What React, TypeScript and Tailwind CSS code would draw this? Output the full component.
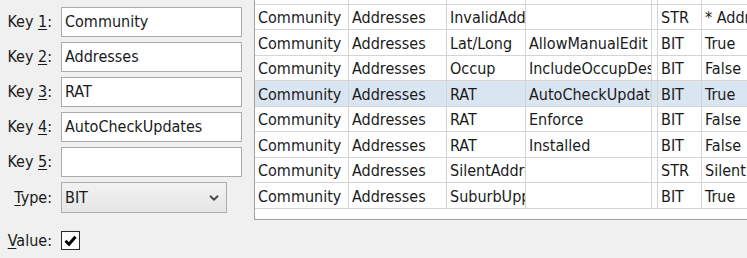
import React from 'react';
import { ChevronDown } from 'lucide-react';

type Row = [string, string, string, string, string, string];

const rows: Row[] = [
  ['Community', 'Addresses', 'InvalidAddress', '', 'STR', '* Address'],
  ['Community', 'Addresses', 'Lat/Long', 'AllowManualEdit', 'BIT', 'True'],
  ['Community', 'Addresses', 'Occup', 'IncludeOccupDesc', 'BIT', 'False'],
  ['Community', 'Addresses', 'RAT', 'AutoCheckUpdates', 'BIT', 'True'],
  ['Community', 'Addresses', 'RAT', 'Enforce', 'BIT', 'False'],
  ['Community', 'Addresses', 'RAT', 'Installed', 'BIT', 'False'],
  ['Community', 'Addresses', 'SilentAddress', '', 'STR', 'Silent'],
  ['Community', 'Addresses', 'SuburbUpper', '', 'BIT', 'True'],
];

const SELECTED = 3;

const font = { fontFamily: '"DejaVu Sans Condensed", "Liberation Sans", sans-serif' };

// cells clip their text at the grid line, like the Swing table does
const cell = 'shrink-0 h-full overflow-hidden whitespace-nowrap pl-[3px] pt-[2px] flex items-center border-r border-[#d4d4d4]';

const Label: React.FC<{ pre: string; u: string; post: string }> = ({ pre, u, post }) => (
  <div className="w-[55px] shrink-0 text-right pr-[3px] text-[#1a1a1a]">
    {pre}
    <span className="underline underline-offset-2">{u}</span>
    {post}
  </div>
);

const Field: React.FC<{ value: string }> = ({ value }) => (
  <div className="w-[181px] h-[30px] ml-[6px] bg-white border border-[#ababab] flex items-center pl-[3px] text-[#1a1a1a]">
    {value}
  </div>
);

export default function App() {
  return (
    <div className="w-[747px] h-[258px] overflow-hidden bg-[#f0f0f0] flex text-[16px]" style={font}>
      {/* form */}
      <div className="w-[254px] shrink-0 flex flex-col pt-[7px] gap-[5px]">
        {[1, 2, 3, 4, 5].map(n => (
          <div key={n} className="flex items-center h-[30px]">
            <Label pre="Key " u={String(n)} post=":" />
            <Field value={['Community', 'Addresses', 'RAT', 'AutoCheckUpdates', ''][n - 1]} />
          </div>
        ))}
        <div className="flex items-center h-[31px]">
          <Label pre="" u="T" post="ype:" />
          <div className="w-[166px] h-[31px] ml-[6px] border border-[#acacac] bg-gradient-to-b from-[#f2f2f2] to-[#e6e6e6] flex items-center pl-[3px] pr-[5px] text-[#1a1a1a]">
            <span className="flex-1">BIT</span>
            <ChevronDown size={14} strokeWidth={3.2} color="#4a4a4a" />
          </div>
        </div>
        <div className="flex items-center h-[19px] mt-[13px]">
          <Label pre="" u="V" post="alue:" />
          <div className="w-[19px] h-[19px] ml-[6px] bg-white border border-[#2a2a2a] flex items-center justify-center">
            <svg width="15" height="15" viewBox="0 0 15 15">
              <path d="M2.5 7.8 L6 11.3 L12.5 3.8" fill="none" stroke="#000" strokeWidth="3" />
            </svg>
          </div>
        </div>
      </div>

      {/* table */}
      <div className="w-[520px] shrink-0 h-[220px] bg-white border-l border-b border-[#a0a0a0] flex flex-col text-[#1a1a1a]">
        {[...Array(9)].map((_, i) => {
          const r = i === 0 ? null : rows[i - 1];
          const h = i === 0 ? 'h-[5px]' : i % 2 === 1 ? 'h-[25px]' : 'h-[26px]';
          const bg = i - 1 === SELECTED ? 'bg-[#dae5f2]' : 'bg-white';
          return (
            <div key={i} className={`flex shrink-0 border-b border-[#d4d4d4] ${h} ${bg}`}>
              <div className={`${cell} w-[94px]`}>{r?.[0]}</div>
              <div className={`${cell} w-[98px]`}>{r?.[1]}</div>
              <div className={`${cell} w-[79px]`}>{r?.[2]}</div>
              <div className={`${cell} w-[126px]`}>{r?.[3]}</div>
              <div className={`${cell} w-[6px]`}></div>
              <div className={`${cell} w-[44px]`}>{r?.[4]}</div>
              <div className={`${cell} w-[80px] border-r-0`}>{r?.[5]}</div>
            </div>
          );
        })}
      </div>
    </div>
  );
}
